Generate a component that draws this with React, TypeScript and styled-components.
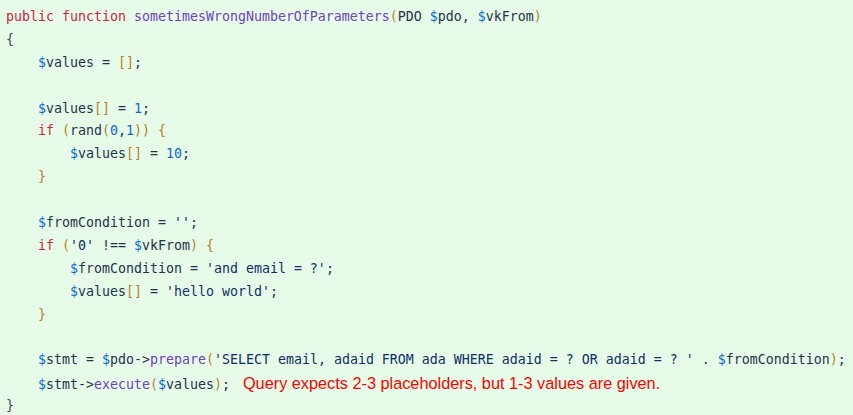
import React from "react";
import styled, { createGlobalStyle } from "styled-components";

const Global = createGlobalStyle`
  html, body { margin: 0; padding: 0; background: #e6fce9; }
`;

const Pane = styled.pre`
  margin: 0;
  padding: 6px 6px 0 6px;
  width: 853px;
  height: 415px;
  box-sizing: border-box;
  background: #e6fce9;
  font-family: "DejaVu Sans Mono", "Liberation Mono", monospace;
  font-size: 13.29px;
  line-height: 22.9px;
  color: #24334a;
  overflow: hidden;
`;

const Line = styled.div`
  display: block;
  height: 22.9px;
  line-height: 22.9px;
  white-space: pre;
`;

type Kind = "kw" | "fn" | "dollar" | "var" | "br" | "str" | "num" | "op";

const colors: Record<Kind, string> = {
  kw: "#d1243f",
  fn: "#6f42c1",
  dollar: "#0b6bd6",
  var: "#24334a",
  br: "#b5811c",
  str: "#0e2f66",
  num: "#1067d4",
  op: "#3a4a5e",
};

const Tok = styled.span<{ $k: Kind }>`
  color: ${(p) => colors[p.$k]};
`;

const Message = styled.span`
  font-family: "Liberation Sans", Arial, sans-serif;
  font-size: 16.3px;
  color: #ff0000;
  margin-left: 13px;
  white-space: pre;
`;

const K = ({ k, children }: { k: Kind; children: React.ReactNode }) => (
  <Tok $k={k}>{children}</Tok>
);

const V = ({ n }: { n: string }) => (
  <>
    <K k="dollar">$</K>
    <K k="var">{n}</K>
  </>
);

export default function App() {
  return (
    <>
      <Global />
      <Pane>
        <Line>
          <K k="kw">public</K> <K k="kw">function</K>{" "}
          <K k="fn">sometimesWrongNumberOfParameters</K>
          <K k="br">(</K>PDO <V n="pdo" />, <V n="vkFrom" />
          <K k="br">)</K>
        </Line>
        <Line>
          <K k="op">{"{"}</K>
        </Line>
        <Line>
          {"    "}
          <V n="values" /> = <K k="br">[]</K>;
        </Line>
        <Line />
        <Line>
          {"    "}
          <V n="values" />
          <K k="br">[]</K> = <K k="num">1</K>;
        </Line>
        <Line>
          {"    "}
          <K k="kw">if</K> <K k="br">(</K>rand<K k="br">(</K>
          <K k="num">0</K>,<K k="num">1</K>
          <K k="br">))</K> <K k="br">{"{"}</K>
        </Line>
        <Line>
          {"        "}
          <V n="values" />
          <K k="br">[]</K> = <K k="num">10</K>;
        </Line>
        <Line>
          {"    "}
          <K k="br">{"}"}</K>
        </Line>
        <Line />
        <Line>
          {"    "}
          <V n="fromCondition" /> = <K k="str">''</K>;
        </Line>
        <Line>
          {"    "}
          <K k="kw">if</K> <K k="br">(</K>
          <K k="str">'0'</K> !== <V n="vkFrom" />
          <K k="br">)</K> <K k="br">{"{"}</K>
        </Line>
        <Line>
          {"        "}
          <V n="fromCondition" /> = <K k="str">'and email = ?'</K>;
        </Line>
        <Line>
          {"        "}
          <V n="values" />
          <K k="br">[]</K> = <K k="str">'hello world'</K>;
        </Line>
        <Line>
          {"    "}
          <K k="br">{"}"}</K>
        </Line>
        <Line />
        <Line>
          {"    "}
          <V n="stmt" /> = <V n="pdo" />
          -&gt;<K k="fn">prepare</K>
          <K k="br">(</K>
          <K k="str">'SELECT email, adaid FROM ada WHERE adaid = ? OR adaid = ? '</K> .{" "}
          <V n="fromCondition" />
          <K k="br">)</K>;
        </Line>
        <Line>
          {"    "}
          <V n="stmt" />
          -&gt;<K k="fn">execute</K>
          <K k="br">(</K>
          <V n="values" />
          <K k="br">)</K>;
          <Message>Query expects 2-3 placeholders, but 1-3 values are given.</Message>
        </Line>
        <Line>
          <K k="op">{"}"}</K>
        </Line>
      </Pane>
    </>
  );
}
